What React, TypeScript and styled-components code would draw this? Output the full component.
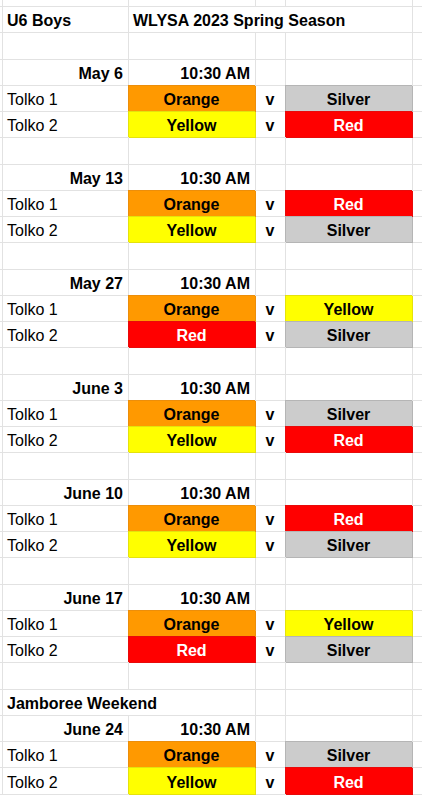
import React from "react";
import styled, { createGlobalStyle, css } from "styled-components";

const GlobalStyle = createGlobalStyle`
  html, body {
    margin: 0;
    padding: 0;
    background: #ffffff;
    overflow: hidden;
  }
  body {
    font-family: "Liberation Sans", Arial, sans-serif;
  }
`;

type Fill = "orange" | "yellow" | "red" | "silver";

const fills: Record<Fill, { bg: string; edge: string; fg: string }> = {
  orange: { bg: "#ff9900", edge: "#ec8e0a", fg: "#000000" },
  yellow: { bg: "#ffff00", edge: "#e5e20c", fg: "#000000" },
  red: { bg: "#ff0000", edge: "#e80a0a", fg: "#ffffff" },
  silver: { bg: "#cccccc", edge: "#b5b5b5", fg: "#000000" },
};

const GRID = "#e2e2e2";

const Sheet = styled.div`
  display: grid;
  grid-template-columns: 3px 126px 127px 30px 127px 10px;
  grid-template-rows: 7px repeat(30, 26.25px);
  width: 423px;
  color: #000000;
  font-size: 16px;
`;

const Cell = styled.div<{
  $align?: "left" | "right" | "center";
  $bold?: boolean;
  $fill?: Fill;
  $span?: number;
}>`
  box-sizing: border-box;
  min-width: 0;
  border-right: 1px solid ${GRID};
  border-bottom: 1px solid ${GRID};
  display: flex;
  align-items: flex-end;
  justify-content: ${(p) =>
    p.$align === "right" ? "flex-end" : p.$align === "center" ? "center" : "flex-start"};
  padding: 0 5px 2px 4px;
  white-space: nowrap;
  line-height: normal;
  font-weight: ${(p) => (p.$bold ? 700 : 400)};
  ${(p) => p.$span && css`grid-column: span ${p.$span};`}
  ${(p) =>
    p.$fill &&
    css`
      background: ${fills[p.$fill].bg};
      color: ${fills[p.$fill].fg};
      border-right-color: ${fills[p.$fill].edge};
      border-bottom-color: ${fills[p.$fill].edge};
      box-shadow: -1px -1px 0 0 ${fills[p.$fill].edge};
    `}
`;

const Edge = styled.div`
  box-sizing: border-box;
  border-right: 1px solid ${GRID};
  border-bottom: 1px solid ${GRID};
`;

type Match = [Fill, Fill];
type Week = { date: string; games: [Match, Match] };

const label: Record<Fill, string> = {
  orange: "Orange",
  yellow: "Yellow",
  red: "Red",
  silver: "Silver",
};

const weeks: Week[] = [
  { date: "May 6", games: [["orange", "silver"], ["yellow", "red"]] },
  { date: "May 13", games: [["orange", "red"], ["yellow", "silver"]] },
  { date: "May 27", games: [["orange", "yellow"], ["red", "silver"]] },
  { date: "June 3", games: [["orange", "silver"], ["yellow", "red"]] },
  { date: "June 10", games: [["orange", "red"], ["yellow", "silver"]] },
  { date: "June 17", games: [["orange", "yellow"], ["red", "silver"]] },
];

const jamboree: Week = { date: "June 24", games: [["orange", "silver"], ["yellow", "red"]] };

const BlankRow: React.FC = () => (
  <>
    <Edge />
    <Cell />
    <Cell />
    <Cell />
    <Cell />
    <Edge />
  </>
);

const WeekBlock: React.FC<{ week: Week; trailing: boolean }> = ({ week, trailing }) => (
  <>
    <Edge />
    <Cell $align="right" $bold>{week.date}</Cell>
    <Cell $align="right" $bold>10:30 AM</Cell>
    <Cell />
    <Cell />
    <Edge />
    {week.games.map(([home, away], i) => (
      <React.Fragment key={i}>
        <Edge />
        <Cell>Tolko {i + 1}</Cell>
        <Cell $align="center" $bold $fill={home}>{label[home]}</Cell>
        <Cell $align="center" $bold>v</Cell>
        <Cell $align="center" $bold $fill={away}>{label[away]}</Cell>
        <Edge />
      </React.Fragment>
    ))}
    {trailing && <BlankRow />}
  </>
);

export default function App() {
  return (
    <>
      <GlobalStyle />
      <Sheet>
        <Edge />
        <Edge />
        <Edge />
        <Edge />
        <Edge />
        <Edge />

        <Edge />
        <Cell $bold>U6 Boys</Cell>
        <Cell $bold $span={3}>WLYSA 2023 Spring Season</Cell>
        <Edge />

        <BlankRow />

        {weeks.map((w) => (
          <WeekBlock key={w.date} week={w} trailing />
        ))}

        <Edge />
        <Cell $bold $span={2}>Jamboree Weekend</Cell>
        <Cell />
        <Cell />
        <Edge />

        <WeekBlock week={jamboree} trailing={false} />
      </Sheet>
    </>
  );
}
